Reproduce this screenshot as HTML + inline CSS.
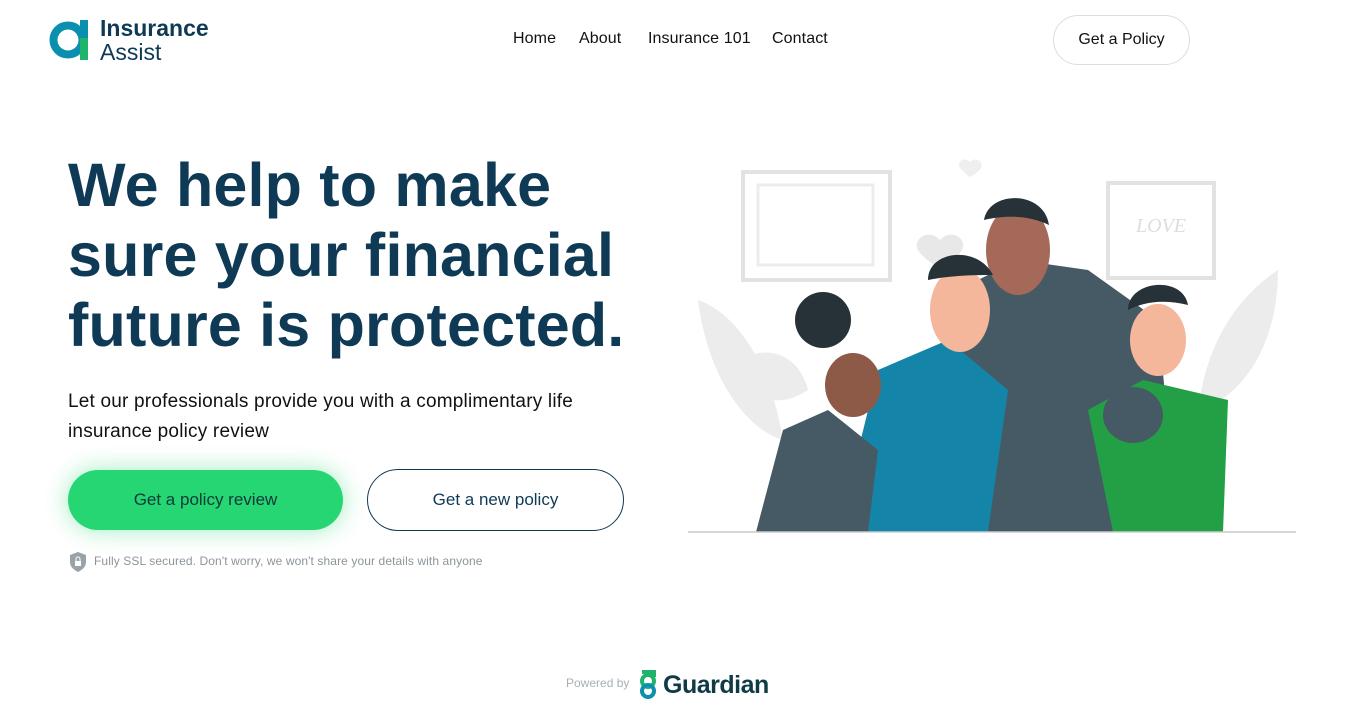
<!DOCTYPE html>
<html><head><meta charset="utf-8"><style>
*{margin:0;padding:0;box-sizing:border-box}
body{width:1355px;height:717px;background:#fff;font-family:"Liberation Sans",sans-serif;position:relative;overflow:hidden;color:#0e1a24}
.abs{position:absolute}
nav a{position:absolute;top:30px;font-size:16px;color:#111;text-decoration:none;white-space:nowrap;letter-spacing:0.1px}
h1{position:absolute;left:68px;top:150px;font-size:61px;line-height:70px;color:#0f3a56;font-weight:700;letter-spacing:0.2px;white-space:nowrap}
.p{left:68px;top:387px;font-size:19px;line-height:30px;color:#111;letter-spacing:0.2px;white-space:nowrap}
.b1{left:68px;top:470px;width:275px;height:60px;border-radius:30px;background:#25d672;box-shadow:0 0 24px rgba(37,214,114,.45);font-size:17px;color:#0f3a3a;text-align:center;line-height:60px}
.b2{left:367px;top:469px;width:257px;height:62px;border-radius:31px;border:1px solid #0f3a56;font-size:17px;color:#0f3a56;text-align:center;line-height:60px}
</style></head><body>
<svg class="abs" style="left:48px;top:20px" width="44" height="40" viewBox="0 0 44 40"><circle cx="20" cy="20" r="14.5" fill="none" stroke="#0a8fae" stroke-width="8"/><rect x="32" y="0" width="8" height="40" fill="#0a8fae"/><rect x="32" y="18" width="8" height="22" fill="#1fb36b"/></svg>
<div class="abs" style="left:100px;top:16px;font-size:23px;line-height:24px;color:#0f3a56;font-weight:700">Insurance</div>
<div class="abs" style="left:100px;top:40px;font-size:23px;line-height:24px;color:#0f3a56">Assist</div>
<nav><a style="left:513px">Home</a><a style="left:579px">About</a><a style="left:648px">Insurance 101</a><a style="left:772px">Contact</a></nav>
<div class="abs" style="left:1053px;top:15px;width:137px;height:50px;border:1px solid #ddd;border-radius:25px;text-align:center;line-height:48px;font-size:16px;color:#111">Get a Policy</div>
<h1>We help to make<br>sure your financial<br>future is protected.</h1>
<div class="abs p">Let our professionals provide you with a complimentary life<br>insurance policy review</div>
<div class="abs b1">Get a policy review</div>
<div class="abs b2">Get a new policy</div>
<svg class="abs" style="left:68px;top:551px" width="20" height="22" viewBox="0 0 20 22"><path d="M10 1L18 4V11C18 16 14 19 10 21C6 19 2 16 2 11V4Z" fill="#9aa3a8"/><rect x="7" y="10" width="6" height="5" fill="#fff"/><path d="M8 10V8a2 2 0 0 1 4 0v2" stroke="#fff" fill="none"/></svg>
<div class="abs" style="left:94px;top:554px;font-size:12px;color:#8c959a;letter-spacing:0.1px">Fully SSL secured. Don't worry, we won't share your details with anyone</div>
<svg class="abs" style="left:688px;top:150px" width="610" height="385" viewBox="0 0 610 385">
<path d="M10 150C40 160 80 200 95 290 60 280 20 230 10 150Z" fill="#ececec"/><path d="M40 220C70 190 110 200 120 240 90 260 60 250 40 220Z" fill="#ececec"/>
<path d="M590 120C560 140 520 180 510 260 550 250 590 200 590 120Z" fill="#ececec"/>
<rect x="55" y="22" width="147" height="108" fill="#fff" stroke="#e2e2e2" stroke-width="4"/><rect x="70" y="35" width="115" height="80" fill="none" stroke="#ececec" stroke-width="3"/>
<rect x="420" y="33" width="106" height="95" fill="#fff" stroke="#e2e2e2" stroke-width="4"/><text x="448" y="82" font-size="20" fill="#ddd" font-family="Liberation Serif" font-style="italic">LOVE</text>
<path d="M252 90c-10-12-28-2-22 10 6 10 22 18 22 18s16-8 22-18c6-12-12-22-22-10z" fill="#e8e8e8"/>
<path d="M282 12c-6-6-14 0-10 6 4 5 10 9 10 9s8-4 11-9c3-6-5-12-11-6z" fill="#efefef"/>
<path d="M250 382L270 140 330 110 400 120 470 170 490 382Z" fill="#465a65"/>
<ellipse cx="330" cy="100" rx="32" ry="45" fill="#a5695a"/><path d="M296 70c5-30 60-30 65 5-20-10-45-10-65-5z" fill="#263238"/>
<path d="M150 382L190 220 260 190 320 240 300 382Z" fill="#1485a8"/>
<ellipse cx="272" cy="160" rx="30" ry="42" fill="#f4b79b"/><path d="M240 130c0-30 50-35 65-5-15 0-40 0-65 5z" fill="#263238"/>
<path d="M68 382L95 280 140 260 190 300 180 382Z" fill="#455a64"/>
<ellipse cx="165" cy="235" rx="28" ry="32" fill="#8d5a47"/><circle cx="135" cy="170" r="28" fill="#263238"/>
<path d="M425 382L400 260 455 230 540 250 535 382Z" fill="#23a046"/>
<ellipse cx="470" cy="190" rx="28" ry="36" fill="#f4b79b"/><path d="M440 160c0-30 55-35 60-5-20-5-40-5-60 5z" fill="#263238"/>
<ellipse cx="445" cy="265" rx="30" ry="28" fill="#455a64"/>
<line x1="0" y1="382" x2="608" y2="382" stroke="#ccc" stroke-width="1.5"/>
</svg>
<div class="abs" style="left:566px;top:676px;font-size:12px;color:#a7b0b5">Powered by</div>
<svg class="abs" style="left:638px;top:670px" width="20" height="30" viewBox="0 0 20 30"><path d="M4 2h12v5" fill="none" stroke="#1fb36b" stroke-width="4"/><circle cx="10" cy="11" r="6" fill="none" stroke="#1fb36b" stroke-width="4"/><circle cx="10" cy="21" r="6" fill="none" stroke="#0a8fae" stroke-width="4"/></svg>
<div class="abs" style="left:663px;top:671px;font-size:25px;font-weight:700;color:#0f3a46;letter-spacing:-0.5px">Guardian</div>
</body></html>
